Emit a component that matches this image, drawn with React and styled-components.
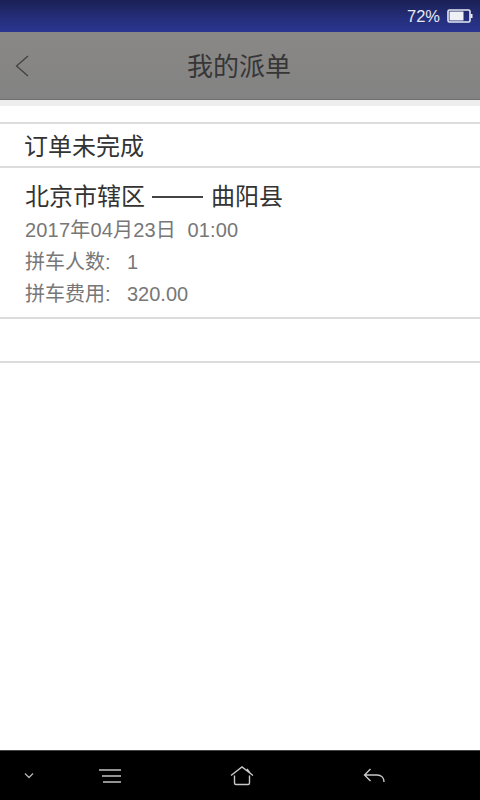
import styled, { createGlobalStyle } from "styled-components";

const GlobalStyle = createGlobalStyle`
  html, body {
    margin: 0;
    padding: 0;
    background: #fff;
  }
  * {
    box-sizing: border-box;
  }
`;

const FONT = `"Liberation Sans", "Noto Sans CJK SC", sans-serif`;

export default function App() {
  return (
    <Screen>
      <GlobalStyle />
      <StatusBar>
        <Percent>72%</Percent>
        <svg width="26" height="14" viewBox="0 0 26 14">
          <rect x="1" y="1" width="22" height="12" rx="1.5" fill="none" stroke="#e8eaf4" strokeWidth="1.6" />
          <rect x="2.5" y="2.5" width="14" height="9" fill="#eef0f6" />
          <rect x="23.5" y="5" width="2" height="4" fill="#e8eaf4" />
        </svg>
      </StatusBar>
      <TitleBar>
        <BackButton>
          <svg width="14" height="22" viewBox="0 0 14 22">
            <path d="M13 1 L1.5 11 L13 21" fill="none" stroke="#3f3f3f" strokeWidth="1.2" />
          </svg>
        </BackButton>
        <Title>我的派单</Title>
      </TitleBar>
      <Gap />
      <Main>
        <SectionHead>订单未完成</SectionHead>
        <OrderCard>
          <Route>
            <span>北京市辖区</span>
            <RouteDash />
            <span>曲阳县</span>
          </Route>
          <DateLine>2017年04月23日&nbsp;&nbsp;01:00</DateLine>
          <Meta>
            <MetaLabel>拼车人数:</MetaLabel>1
          </Meta>
          <Meta>
            <MetaLabel>拼车费用:</MetaLabel>320.00
          </Meta>
        </OrderCard>
        <EmptyRow />
      </Main>
      <NavBar>
        <NavSlot $width="58px">
          <svg width="12" height="8" viewBox="0 0 12 8">
            <path d="M2 1.5 L6 5.5 L10 1.5" fill="none" stroke="#b5b5b5" strokeWidth="1.3" />
          </svg>
        </NavSlot>
        <NavSlot $width="104px">
          <svg width="24" height="16" viewBox="0 0 24 16">
            <path d="M1 2 H23 M4 8 H23 M5 14 H23" fill="none" stroke="#c4c4c4" strokeWidth="1.4" />
          </svg>
        </NavSlot>
        <NavSlot $width="160px">
          <svg width="24" height="20" viewBox="0 0 24 20">
            <path
              d="M1 9.5 L12 1 L23 9.5 M4.5 9.5 V17 a1.5 1.5 0 0 0 1.5 1.5 H18 a1.5 1.5 0 0 0 1.5 -1.5 V9.5 M17 3 L20 7"
              fill="none"
              stroke="#c8c8c8"
              strokeWidth="1.4"
            />
          </svg>
        </NavSlot>
        <NavSlot $width="104px">
          <svg width="22" height="16" viewBox="0 0 22 16">
            <path d="M7.5 1 L1.5 7 L7.5 13 M2 7 H14 C18.5 7 21 10 21 14" fill="none" stroke="#c8c8c8" strokeWidth="1.4" />
          </svg>
        </NavSlot>
      </NavBar>
    </Screen>
  );
}

const Screen = styled.div`
  width: 480px;
  height: 800px;
  display: flex;
  flex-direction: column;
  overflow: hidden;
  background: #fff;
  font-family: ${FONT};
`;
const StatusBar = styled.div`
  height: 32px;
  flex: none;
  display: flex;
  align-items: center;
  justify-content: flex-end;
  gap: 7px;
  padding-right: 7px;
  background: linear-gradient(180deg, #1a2054 0%, #252f7c 60%, #2a3690 100%);
`;
const Percent = styled.span`
  font-size: 16.5px;
  color: #e6e8f4;
`;
const TitleBar = styled.div`
  height: 68px;
  flex: none;
  display: flex;
  align-items: center;
  justify-content: center;
  position: relative;
  padding-top: 2px;
  background: linear-gradient(180deg, #8a8886 0%, #838383 100%);
  border-bottom: 1px solid #6f6f6f;
`;
const BackButton = styled.div`
  position: absolute;
  left: 15px;
  top: 23px;
  display: flex;
`;
const Title = styled.h1`
  margin: 0 2px 0 0;
  font-size: 26px;
  font-weight: 400;
  line-height: 1;
  color: #363636;
`;
const Gap = styled.div`
  height: 6px;
  flex: none;
  background: #eeeeee;
`;
const Main = styled.div`
  flex: 1;
  padding-top: 16px;
  background: #fff;
`;
const SectionHead = styled.div`
  height: 46px;
  display: flex;
  align-items: center;
  padding: 0 0 1px 24px;
  border-top: 2px solid #dcdcdc;
  border-bottom: 2px solid #dcdcdc;
  font-size: 24px;
  color: #333;
`;
const OrderCard = styled.div`
  height: 151px;
  padding: 13px 25px 0;
  border-bottom: 2px solid #dcdcdc;
`;
const Route = styled.div`
  display: flex;
  align-items: center;
  gap: 8px;
  font-size: 24px;
  line-height: 32px;
  color: #333;
  margin-bottom: 1px;
`;
const RouteDash = styled.i`
  width: 51px;
  height: 2px;
  margin-left: -1px;
  background: #444;
`;
const DateLine = styled.div`
  font-size: 20px;
  line-height: 32px;
  letter-spacing: 0.18px;
  color: #777;
`;
const Meta = styled.div`
  display: flex;
  font-size: 20px;
  line-height: 32px;
  color: #777;
`;
const MetaLabel = styled.span`
  width: 102px;
`;
const EmptyRow = styled.div`
  height: 44px;
  border-bottom: 2px solid #dcdcdc;
`;
const NavBar = styled.div`
  height: 50px;
  flex: none;
  display: flex;
  align-items: center;
  background: #000;
  border-top: 1px solid #444;
`;
const NavSlot = styled.div`
  width: ${(props) => props.$width};
  display: flex;
  justify-content: center;
`;
